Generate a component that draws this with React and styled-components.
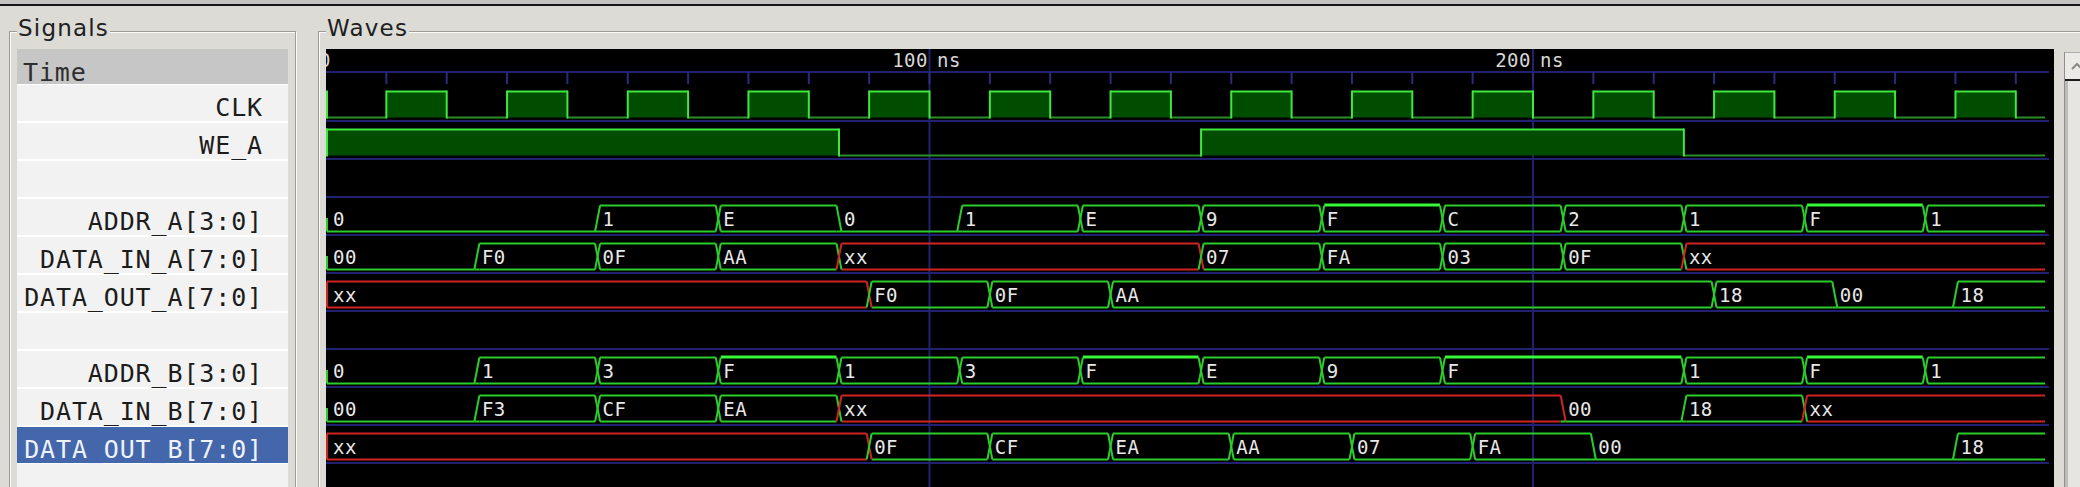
import React from "react";
import styled, { createGlobalStyle } from "styled-components";

const NS = 6.035; // px per ns
const TRACE_W = 1723;
const WAVE_END = 1719;
const END_T = 999;
const HI = 7.5;
const LO = 33.5;
const D = 2.5;

const NAVY = "#212170";
const GREEN = "#2bcc2b";
const BRIGHT = "#3ee83e";
const DIM = "#2a8c2a";
const FILL = "#004d00";
const RED = "#d02424";

const GlobalStyle = createGlobalStyle`
  html, body {
    margin: 0;
    background: #dcdbd6;
    overflow: hidden;
  }
  #root {
    width: 2080px;
    height: 487px;
    overflow: hidden;
  }
`;

const signals = [
  { name: "CLK", kind: "clk" },
  { name: "WE_A", kind: "bit", segs: [[0, 85, 1], [85, 145, 0], [145, 225, 1], [225, END_T, 0]] },
  { kind: "blank" },
  {
    name: "ADDR_A[3:0]",
    kind: "bus",
    ones: "F",
    segs: [
      [0, 45, "0"], [45, 65, "1"], [65, 85, "E"], [85, 105, "0"], [105, 125, "1"],
      [125, 145, "E"], [145, 165, "9"], [165, 185, "F"], [185, 205, "C"], [205, 225, "2"],
      [225, 245, "1"], [245, 265, "F"], [265, END_T, "1"],
    ],
  },
  {
    name: "DATA_IN_A[7:0]",
    kind: "bus",
    segs: [
      [0, 25, "00"], [25, 45, "F0"], [45, 65, "0F"], [65, 85, "AA"], [85, 145, "xx"],
      [145, 165, "07"], [165, 185, "FA"], [185, 205, "03"], [205, 225, "0F"], [225, END_T, "xx"],
    ],
  },
  {
    name: "DATA_OUT_A[7:0]",
    kind: "bus",
    segs: [
      [0, 90, "xx"], [90, 110, "F0"], [110, 130, "0F"], [130, 230, "AA"], [230, 250, "18"],
      [250, 270, "00"], [270, END_T, "18"],
    ],
  },
  { kind: "blank" },
  {
    name: "ADDR_B[3:0]",
    kind: "bus",
    ones: "F",
    segs: [
      [0, 25, "0"], [25, 45, "1"], [45, 65, "3"], [65, 85, "F"], [85, 105, "1"],
      [105, 125, "3"], [125, 145, "F"], [145, 165, "E"], [165, 185, "9"], [185, 225, "F"],
      [225, 245, "1"], [245, 265, "F"], [265, END_T, "1"],
    ],
  },
  {
    name: "DATA_IN_B[7:0]",
    kind: "bus",
    segs: [
      [0, 25, "00"], [25, 45, "F3"], [45, 65, "CF"], [65, 85, "EA"], [85, 205, "xx"],
      [205, 225, "00"], [225, 245, "18"], [245, END_T, "xx"],
    ],
  },
  {
    name: "DATA_OUT_B[7:0]",
    kind: "bus",
    selected: true,
    segs: [
      [0, 90, "xx"], [90, 110, "0F"], [110, 130, "CF"], [130, 150, "EA"], [150, 170, "AA"],
      [170, 190, "07"], [190, 210, "FA"], [210, 270, "00"], [270, END_T, "18"],
    ],
  },
];

const clockSegs = (() => {
  const out = [[0, 10, 0]];
  for (let t = 10; t < 290; t += 20) {
    out.push([t, t + 10, 1]);
    out.push([t + 10, t + 20, 0]);
  }
  return out;
})();

const Page = styled.div`
  width: 2080px;
  height: 487px;
  overflow: hidden;
`;

const TopEdge = styled.div`
  height: 4px;
  background: #c4c3bf;
  border-bottom: 2px solid #161616;
`;

const Panels = styled.div`
  display: flex;
  align-items: flex-start;
  gap: 22px;
  padding: 12px 0 0 9px;
`;

const Frame = styled.fieldset`
  box-sizing: border-box;
  flex-shrink: 0;
  width: ${(p) => p.$width}px;
  height: 520px;
  margin: 0;
  padding: 5px 7px 0;
  border: 1px solid #9d9c97;
  box-shadow: inset 1px 1px 0 #fbfbfa, 1px 1px 0 #fbfbfa;
  min-width: 0;
`;

const Legend = styled.legend`
  padding: 0 1px 6px;
  font-family: "DejaVu Sans", sans-serif;
  font-size: 23px;
  line-height: 20px;
  letter-spacing: 1.2px;
  color: #202020;
  background: #dcdbd6;
`;

const SignalList = styled.div`
  height: 470px;
  background: #f2f2f2;
  font-family: "DejaVu Sans Mono", monospace;
  font-size: 25px;
  letter-spacing: 0.87px;
`;

const HeaderRow = styled.div`
  box-sizing: border-box;
  height: 35px;
  padding: 11px 0 0 6px;
  line-height: 25px;
  background: #c6c6c6;
  color: #2e2e2e;
`;

const SignalRow = styled.div`
  box-sizing: border-box;
  height: 38px;
  padding: 9px 25px 0 6px;
  line-height: 28px;
  text-align: right;
  white-space: nowrap;
  border-top: 1px solid #ffffff;
  border-bottom: 1px solid #ffffff;
  background: ${(p) => (p.$selected ? "#4466ab" : "#f2f2f2")};
  color: ${(p) => (p.$selected ? "#eef2fa" : "#1c1c1c")};
`;

const WaveArea = styled.div`
  display: flex;
  align-items: flex-start;
`;

const Canvas = styled.div`
  width: 1728px;
  height: 470px;
  background: #000;
  overflow: hidden;
`;

const Trace = styled.svg`
  display: block;
  width: ${TRACE_W}px;
  height: ${(p) => p.$h}px;
`;

const Value = styled.text`
  font-family: "DejaVu Sans Mono", monospace;
  font-size: 19px;
  letter-spacing: 0.5px;
  fill: ${(p) => (p.$dim ? "#d6d6d6" : "#e8e8e8")};
`;

const ScrollBar = styled.div`
  margin: 3px 0 0 10px;
  width: 22px;
  height: 460px;
  border-left: 1px solid #8f8e8a;
  background: #e6e5e1;
`;

const ScrollButton = styled.div`
  height: 26px;
  border-bottom: 2px solid #1c1c1c;
  border-top: 1px solid #b0afab;
  background: #eceae6;
  display: flex;
  align-items: center;
  padding-left: 6px;
`;

const Trough = styled.div`
  height: 420px;
  border-left: 3px solid #bdbcb8;
`;

const GridLines = ({ h }) => (
  <>
    {[100, 200].map((t) => (
      <rect key={t} x={t * NS - 1} y={0} width={2} height={h} fill={NAVY} />
    ))}
  </>
);

const Separator = () => <rect x={0} y={36} width={TRACE_W} height={2} fill={NAVY} />;

const Ruler = () => {
  const ticks = [];
  for (let k = 1; k <= 28; k++) {
    ticks.push(<rect key={k} x={k * 10 * NS - 1} y={23} width={2} height={12} fill="#2a2a80" />);
  }
  return (
    <Trace $h={35}>
      <GridLines h={35} />
      <rect x={0} y={22} width={TRACE_W} height={2} fill={NAVY} />
      {ticks}
      <Value $dim x={5} y={18} textAnchor="end">0</Value>
      <Value $dim x={602} y={18} textAnchor="end">100</Value>
      <Value $dim x={611} y={18}>ns</Value>
      <Value $dim x={1205} y={18} textAnchor="end">200</Value>
      <Value $dim x={1214} y={18}>ns</Value>
    </Trace>
  );
};

const BitWave = ({ segs }) => (
  <>
    {segs.map(([t0, t1, lvl], i) => {
      const x0 = t0 * NS;
      const x1 = Math.min(t1 * NS, WAVE_END);
      if (x0 >= WAVE_END) return null;
      const edgeX = i === 0 ? 1 : x0;
      return (
        <g key={i}>
          {lvl ? (
            <>
              <rect x={x0} y={HI} width={x1 - x0} height={LO - HI} fill={FILL} />
              <line x1={x0} x2={x1} y1={HI} y2={HI} stroke={BRIGHT} strokeWidth={2} />
            </>
          ) : (
            <line x1={x0} x2={x1} y1={LO} y2={LO} stroke={DIM} strokeWidth={2} />
          )}
          <line x1={edgeX} x2={edgeX} y1={HI - 1} y2={LO + 1} stroke={BRIGHT} strokeWidth={2} />
        </g>
      );
    })}
  </>
);

const isZero = (v) => /^0+$/.test(v);
const colorOf = (v) => (v === "xx" ? RED : GREEN);

const BusWave = ({ segs, ones }) => (
  <>
    {segs.map(([t0, t1, v], i) => {
      const x0 = t0 * NS;
      const x1 = Math.min(t1 * NS, WAVE_END);
      const last = i === segs.length - 1;
      const col = colorOf(v);
      const zero = isZero(v);
      const a = i === 0 ? 1 : x0 + D;
      const b = last ? x1 : x1 - D;
      const allOnes = ones && v === ones;
      const prev = segs[i - 1];
      return (
        <g key={i} strokeWidth={2}>
          <line x1={a} x2={b} y1={LO} y2={LO} stroke={col} />
          {!zero && (
            <line
              x1={a}
              x2={b}
              y1={allOnes ? HI - 0.5 : HI}
              y2={allOnes ? HI - 0.5 : HI}
              stroke={allOnes ? "#39f739" : col}
              strokeWidth={allOnes ? 3 : 2}
            />
          )}
          {i === 0 ? (
            <line x1={1} x2={1} y1={zero ? 20 : HI} y2={LO} stroke={col} />
          ) : (
            <>
              {!isZero(prev[2]) ? (
                <line x1={x0 - D} y1={HI} x2={x0 + D} y2={LO} stroke={colorOf(prev[2])} />
              ) : (
                <line x1={x0 - D} y1={LO} x2={x0 + D} y2={LO} stroke={col} />
              )}
              {!zero ? (
                <line x1={x0 - D} y1={LO} x2={x0 + D} y2={HI} stroke={col} />
              ) : (
                <line x1={x0 - D} y1={LO} x2={x0 + D} y2={LO} stroke={col} />
              )}
            </>
          )}
          <Value x={i === 0 ? 7 : x0 + 5} y={28}>
            {v}
          </Value>
        </g>
      );
    })}
  </>
);

const TraceRow = ({ sig }) => (
  <Trace $h={38}>
    <GridLines h={38} />
    {sig.kind === "clk" && <BitWave segs={clockSegs} />}
    {sig.kind === "bit" && <BitWave segs={sig.segs} />}
    {sig.kind === "bus" && <BusWave segs={sig.segs} ones={sig.ones} />}
    <Separator />
  </Trace>
);

const ArrowUp = () => (
  <svg width="12" height="8" viewBox="0 0 12 8">
    <path d="M1 7 L6 2 L11 7" fill="none" stroke="#8a8a86" strokeWidth="2" />
  </svg>
);

export default function App() {
  return (
    <Page>
      <GlobalStyle />
      <TopEdge />
      <Panels>
        <Frame $width={287}>
          <Legend>Signals</Legend>
          <SignalList>
            <HeaderRow>Time</HeaderRow>
            {signals.map((s, i) => (
              <SignalRow key={i} $selected={s.selected}>
                {s.name || "\u00a0"}
              </SignalRow>
            ))}
          </SignalList>
        </Frame>
        <Frame $width={1790}>
          <Legend>Waves</Legend>
          <WaveArea>
            <Canvas>
              <Ruler />
              {signals.map((s, i) => (
                <TraceRow key={i} sig={s} />
              ))}
              <Trace $h={30}>
                <GridLines h={30} />
              </Trace>
            </Canvas>
            <ScrollBar>
              <ScrollButton>
                <ArrowUp />
              </ScrollButton>
              <Trough />
            </ScrollBar>
          </WaveArea>
        </Frame>
      </Panels>
    </Page>
  );
}
